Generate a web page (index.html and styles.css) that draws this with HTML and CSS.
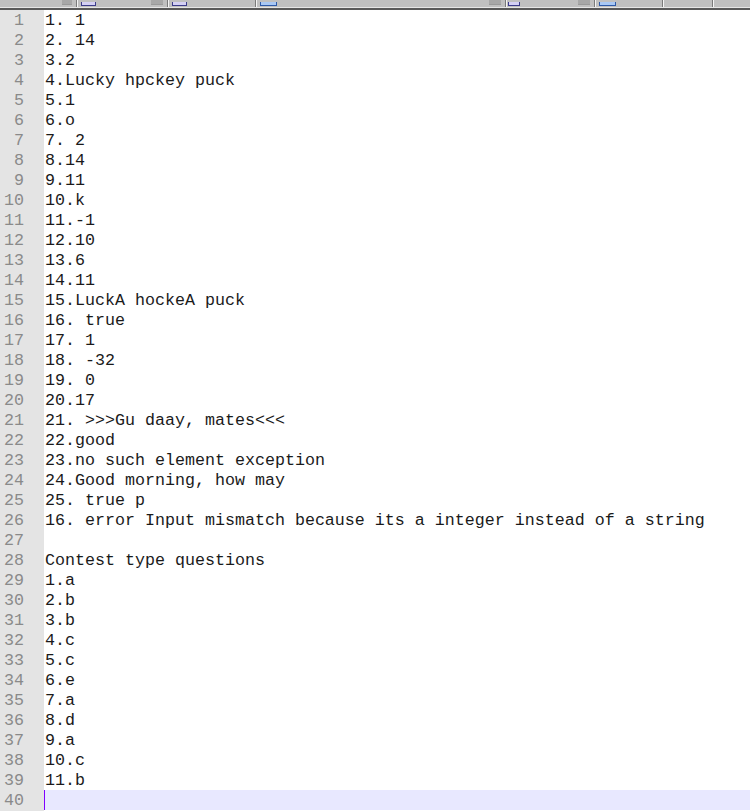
FILE: index.html
```html
<!DOCTYPE html>
<html>
<head>
<meta charset="utf-8">
<link rel="stylesheet" href="styles.css">
</head>
<body>
<div class="tabbar">
  <div class="tab t0"><span class="close"></span></div>
  <div class="tab t1"><span class="ico purple"></span><span class="close"></span></div>
  <div class="tab t2"><span class="ico purple"></span></div>
  <div class="tab t3"><span class="ico blue"></span><span class="close"></span></div>
  <div class="tab t4"><span class="ico purple small"></span><span class="close"></span></div>
  <div class="tab t5"><span class="ico blue"></span></div>
  <div class="tab t6"></div>
  <div class="tab t7"></div>
</div>
<div class="editor">
<div class="line"><span class="num">1</span><span class="code">1. 1</span></div>
<div class="line"><span class="num">2</span><span class="code">2. 14</span></div>
<div class="line"><span class="num">3</span><span class="code">3.2</span></div>
<div class="line"><span class="num">4</span><span class="code">4.Lucky hpckey puck</span></div>
<div class="line"><span class="num">5</span><span class="code">5.1</span></div>
<div class="line"><span class="num">6</span><span class="code">6.o</span></div>
<div class="line"><span class="num">7</span><span class="code">7. 2</span></div>
<div class="line"><span class="num">8</span><span class="code">8.14</span></div>
<div class="line"><span class="num">9</span><span class="code">9.11</span></div>
<div class="line"><span class="num">10</span><span class="code">10.k</span></div>
<div class="line"><span class="num">11</span><span class="code">11.-1</span></div>
<div class="line"><span class="num">12</span><span class="code">12.10</span></div>
<div class="line"><span class="num">13</span><span class="code">13.6</span></div>
<div class="line"><span class="num">14</span><span class="code">14.11</span></div>
<div class="line"><span class="num">15</span><span class="code">15.LuckA hockeA puck</span></div>
<div class="line"><span class="num">16</span><span class="code">16. true</span></div>
<div class="line"><span class="num">17</span><span class="code">17. 1</span></div>
<div class="line"><span class="num">18</span><span class="code">18. -32</span></div>
<div class="line"><span class="num">19</span><span class="code">19. 0</span></div>
<div class="line"><span class="num">20</span><span class="code">20.17</span></div>
<div class="line"><span class="num">21</span><span class="code">21. &gt;&gt;&gt;Gu daay, mates&lt;&lt;&lt;</span></div>
<div class="line"><span class="num">22</span><span class="code">22.good</span></div>
<div class="line"><span class="num">23</span><span class="code">23.no such element exception</span></div>
<div class="line"><span class="num">24</span><span class="code">24.Good morning, how may</span></div>
<div class="line"><span class="num">25</span><span class="code">25. true p</span></div>
<div class="line"><span class="num">26</span><span class="code">16. error Input mismatch because its a integer instead of a string</span></div>
<div class="line"><span class="num">27</span><span class="code"></span></div>
<div class="line"><span class="num">28</span><span class="code">Contest type questions</span></div>
<div class="line"><span class="num">29</span><span class="code">1.a</span></div>
<div class="line"><span class="num">30</span><span class="code">2.b</span></div>
<div class="line"><span class="num">31</span><span class="code">3.b</span></div>
<div class="line"><span class="num">32</span><span class="code">4.c</span></div>
<div class="line"><span class="num">33</span><span class="code">5.c</span></div>
<div class="line"><span class="num">34</span><span class="code">6.e</span></div>
<div class="line"><span class="num">35</span><span class="code">7.a</span></div>
<div class="line"><span class="num">36</span><span class="code">8.d</span></div>
<div class="line"><span class="num">37</span><span class="code">9.a</span></div>
<div class="line"><span class="num">38</span><span class="code">10.c</span></div>
<div class="line"><span class="num">39</span><span class="code">11.b</span></div>
<div class="line current"><span class="num">40</span><span class="code"><span class="caret"></span></span></div>
</div>
</body>
</html>
```
FILE: styles.css
```css
html, body {
  margin: 0;
  padding: 0;
  height: 100%;
}
body {
  width: 750px;
  height: 811px;
  overflow: hidden;
  display: flex;
  flex-direction: column;
  background: linear-gradient(to right, #e4e4e4 44px, #ffffff 44px);
}
.tabbar {
  height: 7px;
  flex: 0 0 7px;
  display: flex;
  background: #c0c0c0;
  border-bottom: 1px solid #e6e6e6;
  box-shadow: 0 2px 0 #5a5a5a;
  margin-bottom: 2px;
  overflow: hidden;
}
.tab {
  position: relative;
  height: 7px;
  border-right: 1px solid #7a7a7a;
  box-shadow: inset 1px 0 0 #f4f4f4;
  display: flex;
  align-items: flex-end;
  box-sizing: border-box;
}
.t0 { width: 77px; box-shadow: none; }
.t1 { width: 91px; }
.t2 { width: 88px; }
.t3 { width: 250px; }
.t4 { width: 89px; }
.t5 { width: 68px; }
.t6 { width: 50px; }
.t7 { flex: 1; border-right: none; }
.ico {
  margin-left: 4px;
  width: 15px;
  height: 4px;
  box-sizing: border-box;
  border: 1px solid #3c3c8a;
  border-top: none;
  background: #d4d0f4;
  margin-bottom: 1px;
}
.ico.blue {
  width: 17px;
  border-color: #2e5aa8;
  background: #a9c8f4;
}
.ico.small { width: 12px; margin-left: 2px; }
.close {
  position: absolute;
  right: 4px;
  top: 0;
  width: 12px;
  height: 4px;
  background: #a8a8a8;
  border-bottom: 1px solid #9a9a9a;
}
.t0 .close { right: 4px; width: 10px; }
.editor {
  display: flex;
  flex-direction: column;
}
.line {
  display: flex;
  height: 20px;
  box-sizing: border-box;
  font-family: "Liberation Mono", "Courier New", monospace;
  font-size: 16.67px;
  line-height: 20px;
}
.num {
  width: 44px;
  flex: 0 0 44px;
  box-sizing: border-box;
  padding-right: 20px;
  padding-top: 1px;
  text-align: right;
  color: #8a8a8a;
  background: #e4e4e4;
  overflow: hidden;
}
.code {
  flex: 1;
  padding-left: 1px;
  padding-top: 1px;
  white-space: pre;
  color: #1a1a1a;
  overflow: hidden;
}
.current .code {
  background: #e8e8ff;
  padding-left: 0;
  padding-top: 0;
}
.caret {
  display: inline-block;
  width: 1px;
  height: 20px;
  vertical-align: top;
  background: #8000ff;
}
```
